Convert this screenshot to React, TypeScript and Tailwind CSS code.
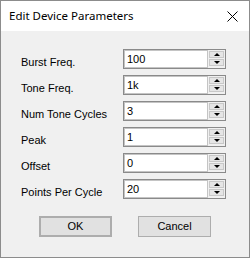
import React from 'react';

const rows = [
  { label: 'Burst Freq.', value: '100' },
  { label: 'Tone Freq.', value: '1k' },
  { label: 'Num Tone Cycles', value: '3' },
  { label: 'Peak', value: '1' },
  { label: 'Offset', value: '0' },
  { label: 'Points Per Cycle', value: '20' },
];

const Spin = ({ value }: { value: string }) => (
  <div className="flex h-[20px] w-[103px] border border-[#8a8a8a] bg-[#f0f0f0]">
    <div className="flex-1 border border-[#c4c4c4] bg-white pl-[2px] pt-[2px] text-[11px] leading-[13px] text-black">
      {value}
    </div>
    <div className="flex w-[17px] flex-col gap-[1px] p-[1px] pb-[2px]">
      <div className="flex flex-1 items-center justify-center border border-[#c8c8c8] bg-[#e5e5e5]">
        <div className="h-0 w-0 border-x-[3.5px] border-b-[3.5px] border-x-transparent border-b-black" />
      </div>
      <div className="flex flex-1 items-center justify-center border border-[#c8c8c8] bg-[#e5e5e5]">
        <div className="h-0 w-0 border-x-[3.5px] border-t-[3.5px] border-x-transparent border-t-black" />
      </div>
    </div>
  </div>
);

export default function App() {
  return (
    <div className="flex h-[258px] w-[250px] flex-col border border-[#8c8c8c] bg-[#f0f0f0] font-['Liberation_Sans',Arial,sans-serif]">
      {/* Title bar */}
      <div className="flex h-[30px] items-center justify-between bg-white pl-[8px] pr-[10px]">
        <span className="font-['Noto_Sans',sans-serif] text-[11.5px] text-black">Edit Device Parameters</span>
        <svg width="11" height="11" viewBox="0 0 11 11" className="mr-[1px]">
          <path d="M0.5 0.5 L10.5 10.5 M10.5 0.5 L0.5 10.5" stroke="#000" strokeWidth="1" />
        </svg>
      </div>

      {/* Fields */}
      <div className="flex flex-col gap-[6px] pl-[20px] pt-[18px]">
        {rows.map((r) => (
          <div key={r.label} className="flex h-[20px]">
            <div className="mt-[7px] w-[102px] text-[11px] leading-[13px] text-black">{r.label}</div>
            <Spin value={r.value} />
          </div>
        ))}
      </div>

      {/* Buttons */}
      <div className="flex gap-[26px] pl-[38px] pt-[17px]">
        <button className="h-[21px] w-[73px] border-2 border-[#adadad] bg-[#e1e1e1] text-[11px] text-black">OK</button>
        <button className="h-[21px] w-[73px] border border-[#adadad] bg-[#e1e1e1] text-[11px] text-black">Cancel</button>
      </div>
    </div>
  );
}
